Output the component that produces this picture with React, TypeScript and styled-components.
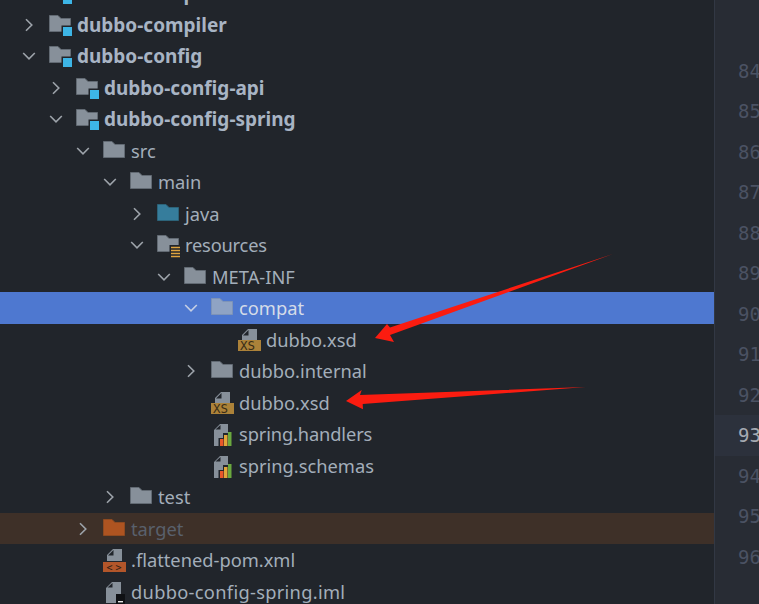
import React from "react";
import styled, { createGlobalStyle } from "styled-components";

const Global = createGlobalStyle`
  html, body { margin: 0; padding: 0; background: #21252b; }
  body { width: 759px; height: 604px; overflow: hidden; }
`;

const Window = styled.div`
  position: relative;
  display: flex;
  width: 759px;
  height: 604px;
  overflow: hidden;
  background: #21252b;
`;

const Tree = styled.div`
  flex: 0 0 714px;
  display: flex;
  flex-direction: column;
  margin-top: -22.6px;
`;

const Row = styled.div<{ $depth: number; $tone: string }>`
  flex: 0 0 31.5px;
  display: flex;
  align-items: center;
  padding-left: ${(p) => 20 + p.$depth * 27}px;
  background: ${(p) => (p.$tone === "selected" ? "#4e78d0" : p.$tone === "ignored" ? "#3e3028" : "transparent")};
`;

const ChevronSlot = styled.span`
  flex: 0 0 18px;
  height: 18px;
  margin-right: 11px;
  display: flex;
  align-items: center;
  justify-content: center;
`;

const IconSvg = styled.svg`
  flex: 0 0 24px;
  width: 24px;
  height: 22px;
  margin-right: 4px;
  overflow: visible;
`;

const Label = styled.span<{ $tone: string; $bold: boolean; $track: number }>`
  font-family: "Noto Sans", "Open Sans", sans-serif;
  font-size: ${(p) => (p.$bold ? 19 : 18.3)}px;
  line-height: 24px;
  letter-spacing: ${(p) => p.$track}px;
  white-space: nowrap;
  font-weight: ${(p) => (p.$bold ? 700 : 400)};
  color: ${(p) => (p.$tone === "selected" ? "#d5dce8" : p.$tone === "ignored" ? "#59606c" : p.$bold ? "#a8b4c4" : "#a3aeba")};
`;

const Divider = styled.div`
  flex: 0 0 1px;
  background: #323844;
`;

const Gutter = styled.div`
  flex: 1;
  display: flex;
  flex-direction: column;
  padding-top: 50.5px;
  background: #282c34;
`;

const LineNumber = styled.div<{ $active: boolean }>`
  flex: 0 0 40.5px;
  box-sizing: border-box;
  padding-left: 23px;
  font-family: "DejaVu Sans Mono", monospace;
  font-size: 19px;
  line-height: 40.5px;
  white-space: nowrap;
  color: ${(p) => (p.$active ? "#a5aab2" : "#4b5263")};
  background: ${(p) => (p.$active ? "#2c313c" : "transparent")};
`;

const ArrowLayer = styled.svg`
  position: absolute;
  inset: 0;
  width: 759px;
  height: 604px;
  pointer-events: none;
`;

const FOLDER = "M0.5 1.5H9L12 4.5H21.5V17.5H0.5Z";

const Chevron = ({ open, selected }: { open: boolean; selected?: boolean }) => (
  <svg width="16" height="16" viewBox="0 0 16 16">
    <path
      d={open ? "M2.2 5L8 10.8L13.8 5" : "M5 2.2L10.8 8L5 13.8"}
      fill="none"
      stroke={selected ? "#c5cfe4" : "#9da3aa"}
      strokeWidth="1.6"
    />
  </svg>
);

const Folder = ({ fill = "#87909a", edge = "#626a73" }: { fill?: string; edge?: string }) => (
  <path d={FOLDER} fill={fill} stroke={edge} strokeWidth="1" />
);

const Icon = ({ kind, selected }: { kind: string; selected?: boolean }) => {
  switch (kind) {
    case "module":
      return (
        <IconSvg viewBox="0 0 24 22">
          <Folder />
          <rect x="12.5" y="11.5" width="11.5" height="11.5" fill="#21252b" />
          <rect x="14" y="13" width="9" height="9" fill="#3db5e6" />
        </IconSvg>
      );
    case "source":
      return (
        <IconSvg viewBox="0 0 24 22">
          <Folder fill="#367d9c" edge="#2c6379" />
        </IconSvg>
      );
    case "resources":
      return (
        <IconSvg viewBox="0 0 24 22">
          <Folder />
          <rect x="12.5" y="11" width="11" height="13" fill="#21252b" />
          <path d="M14 13.5H23M14 16.5H23M14 19.5H23M14 22.5H23" stroke="#dfa43f" strokeWidth="1.6" />
        </IconSvg>
      );
    case "target":
      return (
        <IconSvg viewBox="0 0 24 22">
          <Folder fill="#ae5421" edge="#8f4a20" />
        </IconSvg>
      );
    case "xs":
      return (
        <IconSvg viewBox="0 0 24 22">
          <path d="M4 11V6L10 0H19V11Z" fill="#87909a" />
          <path d="M5 6.5L10.5 1V6.5Z" fill="#21252b" />
          <rect x="0" y="11" width="23" height="11" fill="#ac8239" />
          <text x="2" y="20.5" fontFamily="'DejaVu Sans Mono', monospace" fontSize="12.5" fill="#3a2d17">XS</text>
        </IconSvg>
      );
    case "xml":
      return (
        <IconSvg viewBox="0 0 24 22">
          <path d="M4 12V6L10 0H19V12Z" fill="#87909a" />
          <path d="M5 6.5L10.5 1V6.5Z" fill="#21252b" />
          <rect x="0" y="13" width="23" height="10" fill="#b3562a" />
          <text x="3.5" y="21.5" fontFamily="'DejaVu Sans Mono', monospace" fontSize="10" letterSpacing="3" fill="#2d1d14">&lt;&gt;</text>
        </IconSvg>
      );
    case "chart":
      return (
        <IconSvg viewBox="0 0 24 22">
          <path d="M3 23V7L9 1H17V10H12V23Z" fill="#87909a" />
          <path d="M4.5 6.5L9.5 2V6.5Z" fill="#21252b" />
          <rect x="7.5" y="15" width="13" height="9" fill="#21252b" />
          <rect x="9" y="16" width="3.5" height="7" fill="#e8572a" />
          <rect x="13" y="12" width="3.5" height="11" fill="#e2a63a" />
          <rect x="17" y="9" width="3.5" height="14" fill="#6aa83f" />
        </IconSvg>
      );
    case "iml":
      return (
        <IconSvg viewBox="0 0 24 22">
          <path d="M3 22V7L9 1H18V22Z" fill="#87909a" />
          <path d="M4.5 6.5L9.5 2V6.5Z" fill="#21252b" />
          <rect x="13" y="13" width="9" height="10" fill="#0f1114" />
          <rect x="15" y="20" width="5" height="1.4" fill="#e8e8e8" />
        </IconSvg>
      );
    default:
      return (
        <IconSvg viewBox="0 0 24 22">
          <Folder
            fill={selected ? "#8fa3c4" : "#87909a"}
            edge={selected ? "#7d93b8" : "#626a73"}
          />
        </IconSvg>
      );
  }
};

type Item = { d: number; label: string; icon: string; open?: boolean; tone?: string; bold?: boolean; track?: number };

const items: Item[] = [
  { d: 0, label: "dubbo-compatible", icon: "module", open: false, bold: true },
  { d: 0, label: "dubbo-compiler", icon: "module", open: false, bold: true },
  { d: 0, label: "dubbo-config", icon: "module", open: true, bold: true },
  { d: 1, label: "dubbo-config-api", icon: "module", open: false, bold: true },
  { d: 1, label: "dubbo-config-spring", icon: "module", open: true, bold: true },
  { d: 2, label: "src", icon: "folder", open: true },
  { d: 3, label: "main", icon: "folder", open: true },
  { d: 4, label: "java", icon: "source", open: false },
  { d: 4, label: "resources", icon: "resources", open: true, track: -0.2 },
  { d: 5, label: "META-INF", icon: "folder", open: true },
  { d: 6, label: "compat", icon: "folder", open: true, tone: "selected" },
  { d: 7, label: "dubbo.xsd", icon: "xs" },
  { d: 6, label: "dubbo.internal", icon: "folder", open: false },
  { d: 6, label: "dubbo.xsd", icon: "xs" },
  { d: 6, label: "spring.handlers", icon: "chart", track: -0.13 },
  { d: 6, label: "spring.schemas", icon: "chart" },
  { d: 3, label: "test", icon: "folder", open: false },
  { d: 2, label: "target", icon: "target", open: false, tone: "ignored" },
  { d: 2, label: ".flattened-pom.xml", icon: "xml" },
  { d: 2, label: "dubbo-config-spring.iml", icon: "iml", track: 0.3 },
];

const lines = [84, 85, 86, 87, 88, 89, 90, 91, 92, 93, 94, 95, 96];

export default function App() {
  return (
    <Window>
      <Global />
      <Tree>
        {items.map((it, i) => {
          const tone = it.tone ?? "plain";
          return (
            <Row key={i} $depth={it.d} $tone={tone}>
              <ChevronSlot>
                {it.open !== undefined && <Chevron open={it.open} selected={tone === "selected"} />}
              </ChevronSlot>
              <Icon kind={it.icon} selected={tone === "selected"} />
              <Label $tone={tone} $bold={!!it.bold} $track={it.track ?? 0}>{it.label}</Label>
            </Row>
          );
        })}
      </Tree>
      <Divider />
      <Gutter>
        {lines.map((n) => (
          <LineNumber key={n} $active={n === 93}>{n}</LineNumber>
        ))}
      </Gutter>
      <ArrowLayer viewBox="0 0 759 604">
        <polygon points="613,254 390,327.5 387,324 375,338 394,342 390,335" fill="#fb1c10" />
        <polygon points="585.7,387 360,395 361.7,390 346,401 363,409.3 362.7,404" fill="#fb1c10" />
      </ArrowLayer>
    </Window>
  );
}
